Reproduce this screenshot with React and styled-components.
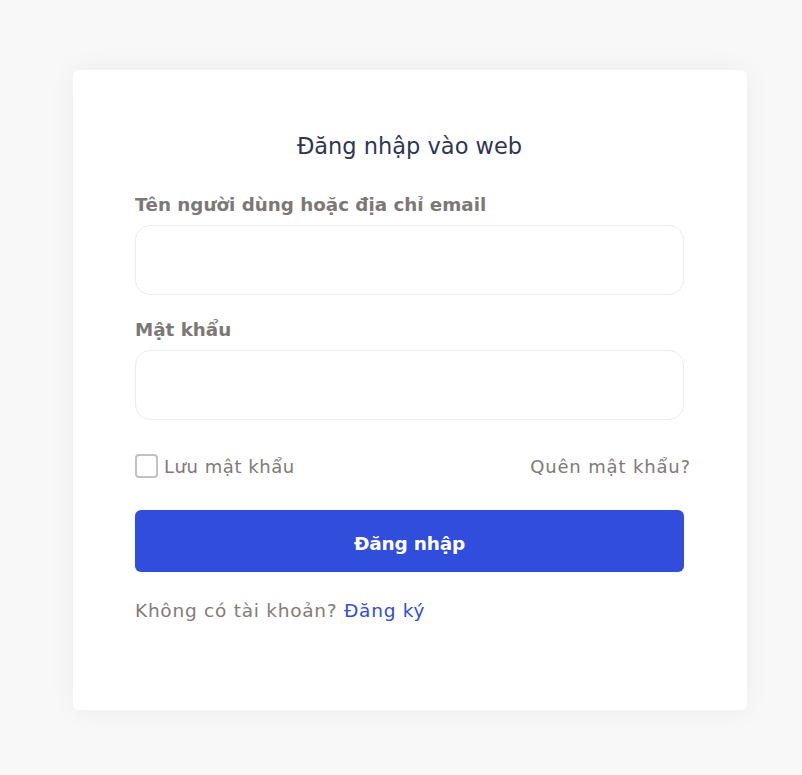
import React from "react";
import styled, { createGlobalStyle } from "styled-components";

const Global = createGlobalStyle`
  html, body { margin: 0; padding: 0; background: #f8f8f8; }
  body { font-family: "DejaVu Sans", "Noto Sans", sans-serif; }
  * { box-sizing: border-box; }
`;

const Page = styled.div`
  min-height: 775px;
  padding: 70px 55px 0 73px;
`;

const Card = styled.form`
  width: 674px;
  height: 640px;
  background: #fff;
  border-radius: 6px;
  box-shadow: 0 0 28px rgba(0, 0, 0, 0.05);
  padding: 62px 63px 0 62px;
  display: flex;
  flex-direction: column;
`;

const Title = styled.h1`
  margin: 0;
  font-weight: 400;
  font-size: 22.5px;
  line-height: 28px;
  color: #2e3652;
  text-align: center;
`;

const Label = styled.label`
  display: block;
  margin-top: ${(p) => p.$mt}px;
  font-weight: 700;
  font-size: 18.3px;
  line-height: 24px;
  color: #7b7876;
`;

const Input = styled.input`
  display: block;
  margin-top: 8px;
  width: 549px;
  height: 70px;
  border: 1px solid #ececee;
  border-radius: 15px;
  background: #fff;
  outline: none;
  padding: 0 16px;
  font-size: 16px;
`;

const OptionsRow = styled.div`
  margin-top: 33px;
  width: 556px;
  display: flex;
  justify-content: space-between;
  align-items: center;
  height: 26px;
`;

const CheckLabel = styled.label`
  display: flex;
  align-items: center;
  gap: 6px;
  font-size: 18px;
  letter-spacing: 0.55px;
  color: #807a78;
`;

const Box = styled.input`
  appearance: none;
  margin: 0;
  width: 23px;
  height: 24px;
  border: 2px solid #c2c2c2;
  border-radius: 4px;
  background: #fff;
`;

const Forgot = styled.a`
  font-size: 18px;
  letter-spacing: 0.85px;
  color: #807a78;
  text-decoration: none;
`;

const Submit = styled.button`
  margin-top: 31px;
  width: 549px;
  height: 62px;
  padding: 4px 0 0;
  border: none;
  border-radius: 6px;
  background: #304ddb;
  color: #fff;
  font-family: "DejaVu Sans", "Noto Sans", sans-serif;
  font-weight: 700;
  font-size: 18.5px;
  letter-spacing: -0.2px;
`;

const Footer = styled.p`
  margin: 27px 0 0;
  font-size: 18.5px;
  letter-spacing: 0.75px;
  line-height: 24px;
  color: #837c79;
`;

const Link = styled.a`
  color: #304ddb;
  text-decoration: none;
`;

export default function App() {
  return (
    <>
      <Global />
      <Page>
        <Card onSubmit={(e) => e.preventDefault()}>
          <Title>Đăng nhập vào web</Title>
          <Label $mt={33}>Tên người dùng hoặc địa chỉ email</Label>
          <Input type="text" />
          <Label $mt={23}>Mật khẩu</Label>
          <Input type="password" />
          <OptionsRow>
            <CheckLabel>
              <Box type="checkbox" />
              Lưu mật khẩu
            </CheckLabel>
            <Forgot href="#">Quên mật khẩu?</Forgot>
          </OptionsRow>
          <Submit type="submit">Đăng nhập</Submit>
          <Footer>
            Không có tài khoản? <Link href="#">Đăng ký</Link>
          </Footer>
        </Card>
      </Page>
    </>
  );
}
